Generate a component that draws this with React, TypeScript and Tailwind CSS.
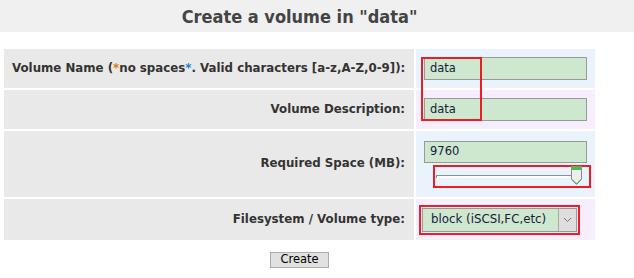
import { ReactNode } from "react"

const font = { fontFamily: '"DejaVu Sans", Verdana, sans-serif' }

function Row({ label, bg, h, children }: { label: ReactNode; bg: string; h: string; children: ReactNode }) {
  return (
    <tr className={h}>
      <td className="bg-[#e9e9e9] pr-[9px] pl-2 text-right align-middle text-[11.8px] font-bold whitespace-nowrap text-[#333]">{label}</td>
      <td className={`${bg} px-2 align-middle`}>{children}</td>
    </tr>
  )
}

function TextBox({ value }: { value: string }) {
  return (
    <div className="flex h-[23px] w-[163px] items-center border border-[#999] bg-[#cde8cf] pl-[5px] text-[11.5px] text-[#1a1a3a]">
      {value}
    </div>
  )
}

export default function App() {
  return (
    <div className="relative h-[278px] w-[634px] bg-white" style={font}>
      {/* cabeçalho */}
      <div className="h-[32px] bg-[#f0f0f0]">
        <div className="flex h-full w-[599px] items-center justify-center">
          <h1 className="text-[18px] font-bold text-[#444]" style={{ fontFamily: '"DejaVu Sans Condensed", "DejaVu Sans", sans-serif' }}>
            Create a volume in "data"
          </h1>
        </div>
      </div>

      <div className="ml-[2px] mt-[15px] w-[595px]">
        <table className="w-full table-fixed border-separate border-spacing-[2px]">
          <colgroup>
            <col className="w-[410px]" />
            <col className="w-[179px]" />
          </colgroup>
          <tbody>
            <Row
              h="h-[39px]"
              bg="bg-[#eaf3fc]"
              label={
                <>
                  Volume Name (<span className="text-[#e07b00]">*</span>no spaces<span className="text-[#1e7fd0]">*</span>. Valid characters [a-z,A-Z,0-9]):
                </>
              }
            >
              <TextBox value="data" />
            </Row>
            <Row h="h-[39px]" bg="bg-[#f6eefc]" label="Volume Description:">
              <TextBox value="data" />
            </Row>
            <Row h="h-[66px]" bg="bg-[#eaf3fc]" label="Required Space (MB):">
              <div className="flex flex-col">
                <div className="flex h-[22px] w-[163px] items-center border border-[#999] bg-[#cde8cf] pl-[5px] text-[11.5px] text-[#1a1a3a]">
                  9760
                </div>
                {/* slider */}
                <div className="ml-[9px] mt-[2px] flex h-[23px] w-[158px] items-center border-2 border-[#ee1c24] pl-[1px]">
                  <div className="h-[3px] w-[136px] border-t border-l border-[#8b9096] bg-white" />
                  <svg width="11" height="19" viewBox="0 0 11 19" className="-ml-[1px] -mt-[2px]">
                    <path d="M0.5 0.5 H10.5 V13 L5.5 18.5 L0.5 13 Z" fill="#eeeeee" stroke="#8c8c8c" />
                    <rect x="1" y="1" width="9" height="3" fill="#3fc43f" />
                    <path d="M1 13.5 L5.5 18 L10 13.5" fill="none" stroke="#3aa63a" />
                  </svg>
                </div>
              </div>
            </Row>
            <Row h="h-[41px]" bg="bg-[#f6eefc]" label="Filesystem / Volume type:">
              <div className="-ml-[5px] w-[161px] border-2 border-[#ee1c24] p-[1px]">
                <div className="flex h-[24px] items-center border border-[#999] bg-[#cde8cf]">
                  <span className="flex-1 pl-[8px] text-[11.8px] whitespace-nowrap text-[#1a1a3a]">block (iSCSI,FC,etc)</span>
                  <span className="flex h-full w-[18px] items-center justify-center border-l border-[#aaa] bg-[#dedede]">
                    <svg width="9" height="6" viewBox="0 0 9 6">
                      <path d="M1 1 L4.5 4.5 L8 1" fill="none" stroke="#777" />
                    </svg>
                  </span>
                </div>
              </div>
            </Row>
          </tbody>
        </table>

        <div className="mt-[10px] flex justify-center">
          <button className="h-[16px] w-[59px] border border-[#adadad] bg-[#e1e1e1] text-[11.5px] leading-none text-black">
            Create
          </button>
        </div>
      </div>

      {/* marcação vermelha sobre as duas primeiras linhas */}
      <div className="pointer-events-none absolute left-[421px] top-[57px] h-[64px] w-[61px] border-2 border-[#ee1c24]" />
    </div>
  )
}
